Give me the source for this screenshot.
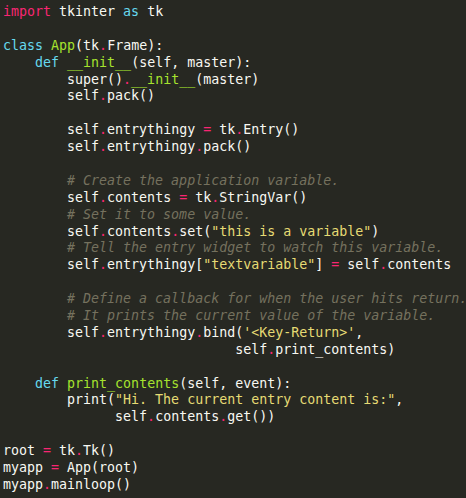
import React from "react";

type Seg = [string, string?];

const K = "text-[#f92672]"; // pink keyword / operator
const B = "text-[#66d9ef]"; // blue
const G = "text-[#a6e22e]"; // green
const S = "text-[#e6db74]"; // string
const C = "text-[#75715e] italic"; // comment

const lines: Seg[][] = [
  [["import", K], [" tkinter "], ["as", B], [" tk"]],
  [],
  [["class", B], [" "], ["App", G], ["(tk"], [".", K], ["Frame):"]],
  [["    "], ["def", B], [" "], ["__init__", G], ["(self, master):"]],
  [["        super()"], [".", K], ["__init__", G], ["(master)"]],
  [["        self"], [".", K], ["pack()"]],
  [],
  [["        self"], [".", K], ["entrythingy "], ["=", K], [" tk"], [".", K], ["Entry()"]],
  [["        self"], [".", K], ["entrythingy"], [".", K], ["pack()"]],
  [],
  [["        "], ["# Create the application variable.", C]],
  [["        self"], [".", K], ["contents "], ["=", K], [" tk"], [".", K], ["StringVar()"]],
  [["        "], ["# Set it to some value.", C]],
  [["        self"], [".", K], ["contents"], [".", K], ["set("], ['"this is a variable"', S], [")"]],
  [["        "], ["# Tell the entry widget to watch this variable.", C]],
  [["        self"], [".", K], ["entrythingy["], ['"textvariable"', S], ["] "], ["=", K], [" self"], [".", K], ["contents"]],
  [],
  [["        "], ["# Define a callback for when the user hits return.", C]],
  [["        "], ["# It prints the current value of the variable.", C]],
  [["        self"], [".", K], ["entrythingy"], [".", K], ["bind("], ["'<Key-Return>'", S], [","]],
  [["                             self"], [".", K], ["print_contents)"]],
  [],
  [["    "], ["def", B], [" "], ["print_contents", G], ["(self, event):"]],
  [["        print("], ['"Hi. The current entry content is:"', S], [","]],
  [["              self"], [".", K], ["contents"], [".", K], ["get())"]],
  [],
  [["root "], ["=", K], [" tk"], [".", K], ["Tk()"]],
  [["myapp "], ["=", K], [" App(root)"]],
  [["myapp"], [".", K], ["mainloop()"]],
];

export default function App() {
  return (
    <div className="w-[466px] h-[498px] bg-[#272822] overflow-hidden pl-[3px] pt-[4px] text-[#f8f8f2] font-['DejaVu_Sans_Mono',monospace] text-[13.3px] leading-[16.9px]">
      {lines.map((segs, i) => (
        <div key={i} className="h-[16.9px] whitespace-pre">
          {segs.length === 0
            ? " "
            : segs.map(([t, c], j) => (
                <span key={j} className={c}>
                  {t}
                </span>
              ))}
        </div>
      ))}
    </div>
  );
}
